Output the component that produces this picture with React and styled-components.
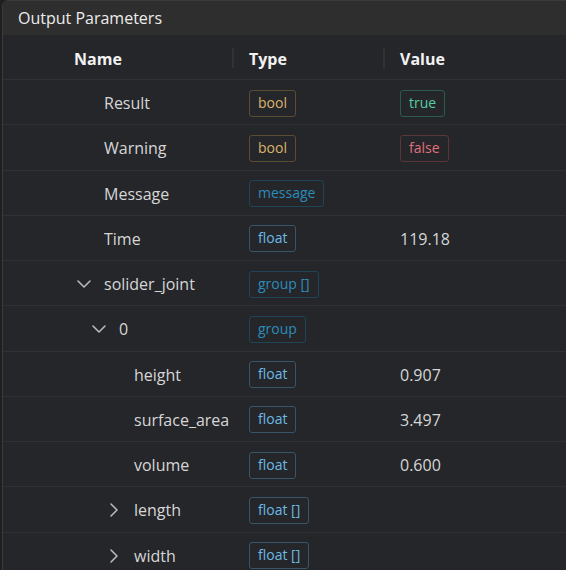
import React from 'react'
import styled, { createGlobalStyle, css } from 'styled-components'
import { ChevronDown, ChevronRight } from 'lucide-react'

const GlobalStyle = createGlobalStyle`
  html, body {
    margin: 0;
    background: #1f1f1f;
    overflow: hidden;
  }
  body {
    font-family: 'Segoe UI', 'Open Sans', 'Noto Sans', sans-serif;
  }
`

const Panel = styled.section`
  margin-left: 2px;
  width: 600px;
  height: 600px;
  border: 1px solid #3a3a3a;
  border-radius: 6px 6px 0 0;
  background: #25262a;
  overflow: hidden;
`

const PanelHeader = styled.header`
  height: 34px;
  display: flex;
  align-items: center;
  padding-left: 15px;
  background: #2e2e2e;
  color: #ececec;
  font-size: 16px;
`

// rows in the reference are a hair over 45px apart
const Row = styled.div`
  display: grid;
  grid-template-columns: 230px 151px 1fr;
  height: ${({ $head }) => ($head ? '40px' : '42.25px')};
  padding-top: ${({ $head }) => ($head ? '4px' : '2px')};
  border-bottom: 1px solid #2f3135;
  align-items: center;
`

const HeadCell = styled.div`
  position: relative;
  height: 100%;
  display: flex;
  align-items: center;
  padding-left: ${({ $first }) => ($first ? '71px' : '16px')};
  color: #f2f2f2;
  font-weight: 700;
  font-size: 16px;

  ${({ $first }) =>
    !$first &&
    css`
      &::before {
        content: '';
        position: absolute;
        left: -1px;
        top: 9px;
        width: 2px;
        height: 20px;
        background: #323232;
      }
    `}
`

const NameCell = styled.div`
  display: flex;
  align-items: center;
  padding-left: ${({ $level }) => 69 + $level * 15}px;
  color: #d6d6d6;
  font-size: 16px;
`

const Toggle = styled.span`
  width: 24px;
  height: 24px;
  margin-right: 8px;
  display: flex;
  align-items: center;
  justify-content: center;
  color: #bdbdbd;
`

const Cell = styled.div`
  padding-left: 16px;
  color: #d6d6d6;
  font-size: 16px;
`

const tagColors = {
  bool: ['#dcb36a', '#5a4c31'],
  true: ['#55cda4', '#2c5a4b'],
  false: ['#e0707a', '#5b3538'],
  group: ['#2c8cbb', '#1f4457'],
  float: ['#6cb9e4', '#385466']
}

const Tag = styled.span`
  display: inline-block;
  height: 25px;
  line-height: 24px;
  padding: 0 8px;
  border: 1px solid ${({ $kind }) => tagColors[$kind][1]};
  border-radius: 3px;
  color: ${({ $kind }) => tagColors[$kind][0]};
  font-size: 14px;
`

const rows = [
  { name: 'Result', level: 0, type: 'bool', kind: 'bool', value: { tag: 'true' } },
  { name: 'Warning', level: 0, type: 'bool', kind: 'bool', value: { tag: 'false' } },
  { name: 'Message', level: 0, type: 'message', kind: 'group' },
  { name: 'Time', level: 0, type: 'float', kind: 'float', value: { text: '119.18' } },
  { name: 'solider_joint', level: 0, toggle: 'open', type: 'group []', kind: 'group' },
  { name: '0', level: 1, toggle: 'open', type: 'group', kind: 'group' },
  { name: 'height', level: 2, type: 'float', kind: 'float', value: { text: '0.907' } },
  { name: 'surface_area', level: 2, type: 'float', kind: 'float', value: { text: '3.497' } },
  { name: 'volume', level: 2, type: 'float', kind: 'float', value: { text: '0.600' } },
  { name: 'length', level: 2, toggle: 'closed', type: 'float []', kind: 'float' },
  { name: 'width', level: 2, toggle: 'closed', type: 'float []', kind: 'float' }
]

const App = () => (
  <>
    <GlobalStyle />
    <Panel>
      <PanelHeader>Output Parameters</PanelHeader>
      <Row $head>
        <HeadCell $first>Name</HeadCell>
        <HeadCell>Type</HeadCell>
        <HeadCell>Value</HeadCell>
      </Row>
      {rows.map((row, i) => (
        <Row key={i}>
          <NameCell $level={row.level}>
            <Toggle>
              {row.toggle === 'open' && <ChevronDown size={24} strokeWidth={1.5} />}
              {row.toggle === 'closed' && <ChevronRight size={24} strokeWidth={1.5} />}
            </Toggle>
            {row.name}
          </NameCell>
          <Cell>
            <Tag $kind={row.kind}>{row.type}</Tag>
          </Cell>
          <Cell>
            {row.value && row.value.tag && <Tag $kind={row.value.tag}>{row.value.tag}</Tag>}
            {row.value && row.value.text}
          </Cell>
        </Row>
      ))}
    </Panel>
  </>
)

export default App
